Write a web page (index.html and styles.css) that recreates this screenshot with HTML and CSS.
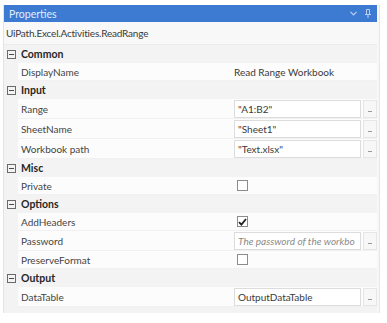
FILE: index.html
```html
<!DOCTYPE html>
<html lang="en">
<head>
    <meta charset="UTF-8">
    <title>Properties</title>
    <link rel="stylesheet" href="styles.css">
</head>
<body>
    <div class="panel">
        <div class="titlebar">
            <span class="title">Properties</span>
            <span class="tools">
                <svg width="7" height="5" viewBox="0 0 7 5" fill="none" stroke="currentColor" stroke-width="1.2">
                    <path d="M0.5 0.8L3.5 3.8L6.5 0.8"></path>
                </svg>
                <svg width="6" height="9" viewBox="0 0 6 9" fill="none" stroke="currentColor" stroke-width="1">
                    <path d="M1.5 0.5h3v5h-3z M0 5.5h6 M3 5.5v3.5"></path>
                </svg>
            </span>
        </div>

        <div class="typename">UiPath.Excel.Activities.ReadRange</div>

        <div class="grid">
            <div class="category"><span class="toggle"></span>Common</div>
            <div class="prop">
                <span class="name">DisplayName</span>
                <span class="value">Read Range Workbook</span>
            </div>

            <div class="category"><span class="toggle"></span>Input</div>
            <div class="prop tall">
                <span class="name">Range</span>
                <span class="value"><span class="box">"A1:B2"</span><span class="more"></span></span>
            </div>
            <div class="prop tall">
                <span class="name">SheetName</span>
                <span class="value"><span class="box">"Sheet1"</span><span class="more"></span></span>
            </div>
            <div class="prop tall">
                <span class="name">Workbook path</span>
                <span class="value"><span class="box">"Text.xlsx"</span><span class="more"></span></span>
            </div>

            <div class="category"><span class="toggle"></span>Misc</div>
            <div class="prop">
                <span class="name">Private</span>
                <span class="value"><span class="check"></span></span>
            </div>

            <div class="category"><span class="toggle"></span>Options</div>
            <div class="prop">
                <span class="name">AddHeaders</span>
                <span class="value">
                    <span class="check">
                        <svg width="9" height="8" viewBox="0 0 9 8" fill="none" stroke="#222" stroke-width="1.8">
                            <path d="M1 4.2L3.4 6.6L8 1"></path>
                        </svg>
                    </span>
                </span>
            </div>
            <div class="prop tall">
                <span class="name">Password</span>
                <span class="value"><span class="box hint">The password of the workbo</span><span class="more"></span></span>
            </div>
            <div class="prop">
                <span class="name">PreserveFormat</span>
                <span class="value"><span class="check"></span></span>
            </div>

            <div class="category"><span class="toggle"></span>Output</div>
            <div class="prop tall">
                <span class="name">DataTable</span>
                <span class="value"><span class="box">OutputDataTable</span><span class="more"></span></span>
            </div>
        </div>
    </div>
</body>
</html>
```

FILE: styles.css
```css
:root {
    --header: #3d7ad2;
    --panel: #f3f3f3;
    --row: #fcfcfc;
    --text: #3a3a3a;
    --line: #dcdcdc;
}

* {
    margin: 0;
    padding: 0;
    box-sizing: border-box;
}

body {
    font-family: 'Lato', 'Open Sans', sans-serif;
    font-size: 10px;
    color: var(--text);
    background: #ffffff;
    padding: 5px 0 0 3px;
}

.panel {
    width: 374px;
    background: var(--panel);
    border-left: 1px solid #e4e4e4;
    box-shadow: 2px 0 0 #f7f7f7, 3px 0 0 #e6e6e6;
    padding-bottom: 6px;
}

.titlebar {
    height: 17px;
    background: var(--header);
    color: #e3ecfa;
    display: flex;
    align-items: center;
    justify-content: space-between;
    padding: 0 6px 0 5px;
}

.title {
    font-size: 10.5px;
}

.tools {
    display: flex;
    align-items: center;
    gap: 8px;
    color: #b9d0f2;
}

.typename {
    height: 23px;
    display: flex;
    align-items: center;
    padding-left: 2px;
    font-size: 10px;
    letter-spacing: -0.2px;
    background: #f8f8f8;
    border-bottom: 1px solid #ececec;
}

.category {
    height: 18px;
    display: flex;
    align-items: center;
    gap: 5px;
    padding-left: 3px;
    font-size: 10.5px;
    font-weight: 700;
    color: #262626;
}

.toggle {
    width: 9px;
    height: 9px;
    border: 1px solid #6a6a6a;
    position: relative;
}

.toggle::after {
    content: "";
    position: absolute;
    left: 1px;
    right: 1px;
    top: 3px;
    height: 1px;
    background: #4a4a4a;
}

.prop {
    height: 18px;
    margin-left: 14px;
    background: var(--row);
    display: grid;
    grid-template-columns: 215px 1fr;
    align-items: center;
    border-bottom: 1px solid #f1f1f1;
}

.prop.tall {
    height: 20px;
}

.name {
    padding-left: 3px;
    color: #444;
}

.value {
    display: flex;
    align-items: center;
    padding-left: 1px;
    gap: 2px;
}

.box {
    width: 127px;
    height: 18px;
    border: 1px solid var(--line);
    background: #ffffff;
    padding-left: 3px;
    display: flex;
    align-items: center;
    white-space: nowrap;
    overflow: hidden;
}

.box.hint {
    font-style: italic;
    color: #8a8a8a;
}

.more {
    width: 14px;
    height: 18px;
    border: 1px solid #e6e6e6;
    background: #f7f7f7;
    position: relative;
}

.more::after {
    content: "";
    position: absolute;
    left: 4px;
    right: 4px;
    bottom: 5px;
    height: 1px;
    background: #9a9a9a;
}

.check {
    width: 11px;
    height: 11px;
    margin-left: 3px;
    border: 1px solid #8c8c8c;
    background: #ffffff;
    display: flex;
    align-items: center;
    justify-content: center;
}
```
